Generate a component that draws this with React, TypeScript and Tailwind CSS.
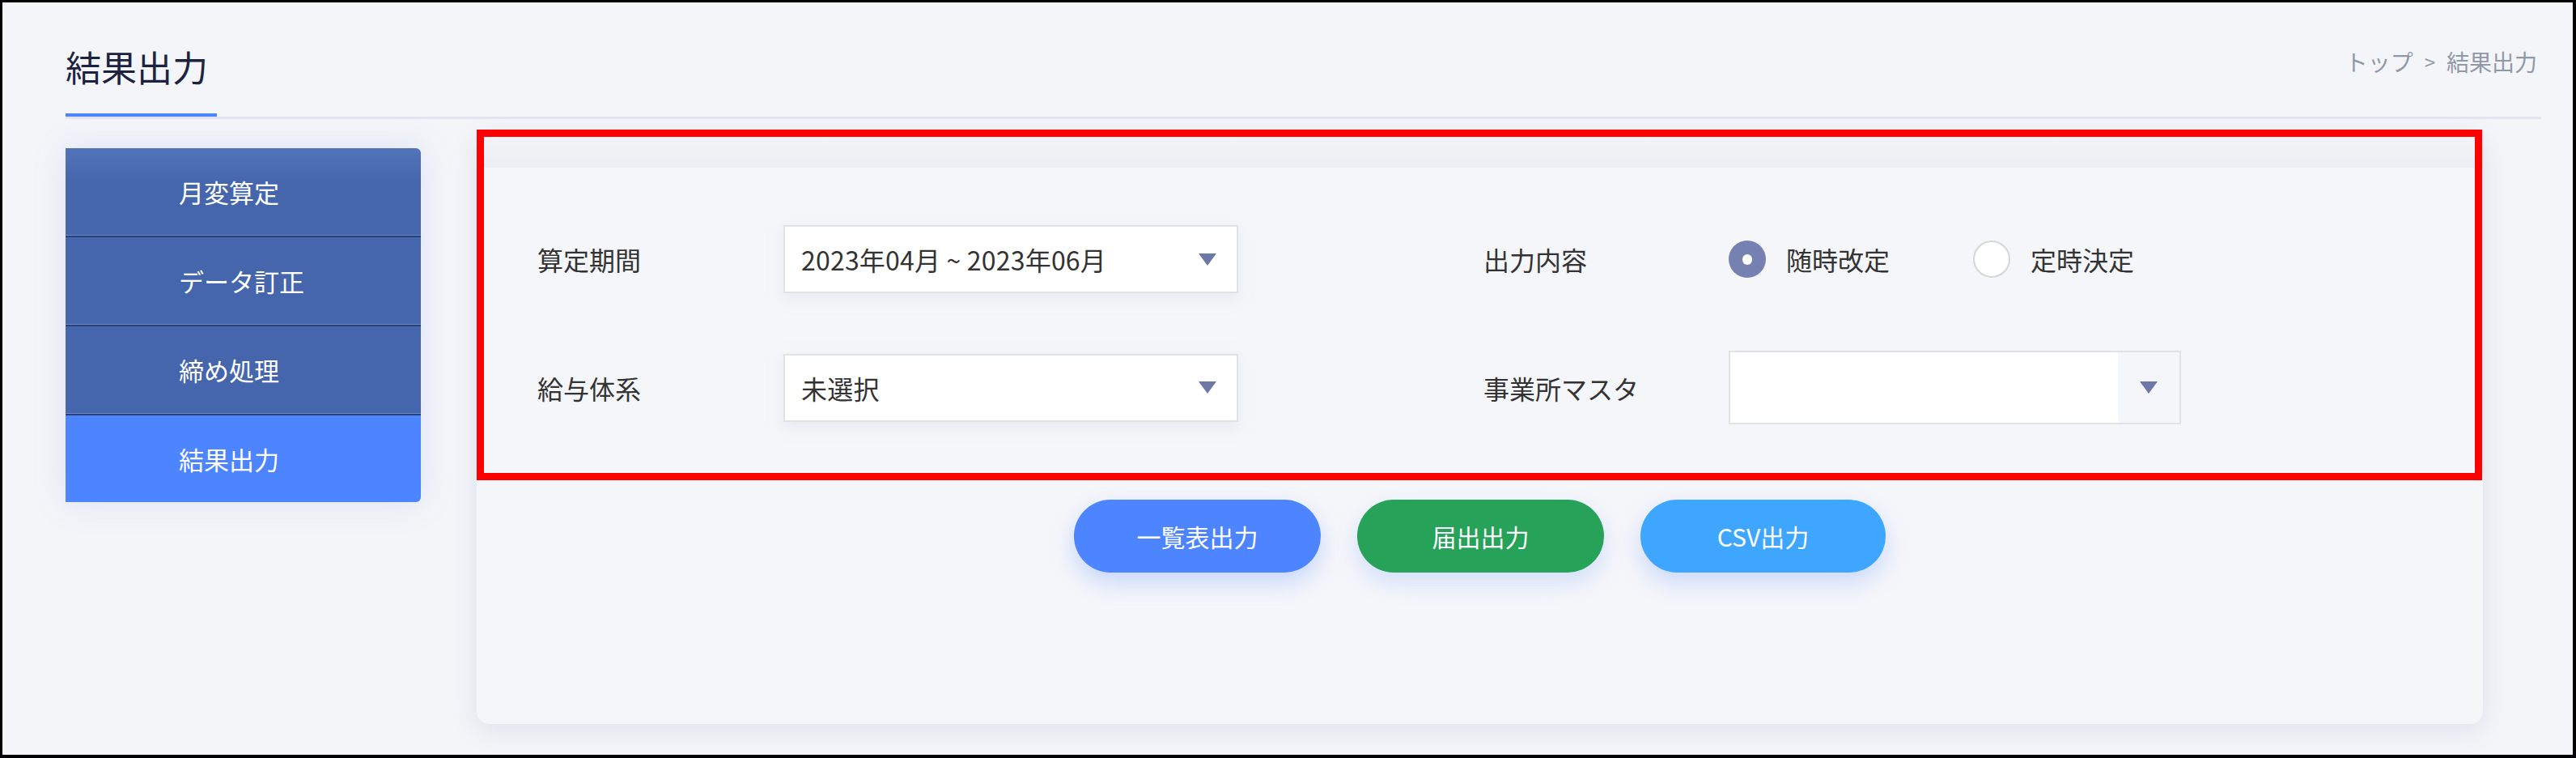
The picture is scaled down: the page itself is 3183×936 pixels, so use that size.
import { useState } from 'react'

const menu = ['月変算定', 'データ訂正', '締め処理', '結果出力']

function Arrow() {
  return (
    <svg width="22" height="15" viewBox="0 0 22 15" className="shrink-0">
      <polygon points="0,0 22,0 11,15" fill="#6c78a8" />
    </svg>
  )
}

function Select({ value }: { value: string }) {
  return (
    <div className="w-[562px] h-[84px] bg-white border-2 border-[#e1e2e6] shadow-[0_6px_14px_rgba(220,224,234,0.5)] flex items-center pl-[20px] pr-[25px]">
      <span className="flex-1 text-[32px] leading-none text-[#333] tracking-[0.2px]">{value}</span>
      <Arrow />
    </div>
  )
}

export default function App() {
  const [kind, setKind] = useState('随時改定')

  return (
    <div className="w-[3183px] h-[936px] overflow-hidden bg-[#f4f5f9] border-t-[3px] border-l-[3px] border-r-4 border-b-4 border-black font-['Noto_Sans_CJK_JP',sans-serif]">
      {/* header */}
      <div className="pl-[78px] pr-[39px] pt-[57px]">
        <div className="flex justify-between items-start">
          <h1 className="text-[44px] leading-none text-[#1c2340]">結果出力</h1>
          <div className="flex items-center text-[28px] leading-none text-[#9198a8] pt-[2px] pr-[5px]">
            <span>トップ</span>
            <span className="mx-[14px] text-[24px]">&gt;</span>
            <span>結果出力</span>
          </div>
        </div>
        <div className="mt-[36px] h-[4px] w-[187px] bg-[#4d84ff]" />
        <div className="h-[3px] bg-[#e2e5ee]" />
      </div>

      <div className="flex items-start pl-[78px] mt-[18px]">
        {/* sidebar */}
        <div className="mt-[18px] w-[439px] rounded-r-[6px] overflow-hidden shadow-[0_0_40px_rgba(110,145,230,0.18)]">
          {menu.map((m, i) => (
            <div key={m}>
              {i > 0 && (
                <>
                  <div className="h-[1px] bg-[#6987c9]" />
                  <div className="h-[2px] bg-[#2b4172]" />
                </>
              )}
              <div
                className={`h-[107px] flex items-center pl-[140px] text-[31px] leading-none text-white ${
                  i === 3 ? 'bg-[#4d84ff]' : i === 0 ? 'bg-gradient-to-b from-[#5373b8] to-[#4566ad] to-40%' : 'bg-[#4566ad]'
                }`}
              >
                {m}
              </div>
            </div>
          ))}
        </div>

        {/* card */}
        <div className="relative ml-[69px] w-[2479px] h-[729px] rounded-[16px] bg-[#f5f6fa] shadow-[0_6px_30px_rgba(190,198,218,0.45)]">
          <div className="h-[42px] rounded-t-[16px] bg-gradient-to-b from-[#f3f4f8] to-[#eceef3]" />

          <div className="pt-[71px] pl-[75px]">
            <div className="grid grid-cols-[1169px_1fr] h-[84px] items-center">
              <div className="flex items-center">
                <div className="w-[304px] text-[32px] leading-none text-[#333]">算定期間</div>
                <Select value="2023年04月 ~ 2023年06月" />
              </div>
              <div className="flex items-center">
                <div className="w-[303px] text-[32px] leading-none text-[#333]">出力内容</div>
                <div className="flex items-center">
                  {['随時改定', '定時決定'].map((r, i) => (
                    <label
                      key={r}
                      onClick={() => setKind(r)}
                      className={`flex items-center gap-[25px] cursor-pointer ${i === 0 ? 'mr-[103px]' : ''}`}
                    >
                      {kind === r ? (
                        <span className="w-[46px] h-[46px] rounded-full bg-[#7481b1] flex items-center justify-center">
                          <span className="w-[12px] h-[13px] rounded-full bg-white" />
                        </span>
                      ) : (
                        <span className="w-[46px] h-[46px] rounded-full bg-white border-2 border-[#d5d6da]" />
                      )}
                      <span className="text-[32px] leading-none text-[#333]">{r}</span>
                    </label>
                  ))}
                </div>
              </div>
            </div>

            <div className="mt-[71px] grid grid-cols-[1169px_1fr] h-[91px] items-center">
              <div className="flex items-center">
                <div className="w-[304px] text-[32px] leading-none text-[#333]">給与体系</div>
                <Select value="未選択" />
              </div>
              <div className="flex items-center">
                <div className="w-[303px] text-[32px] leading-none text-[#333]">事業所マスタ</div>
                <div className="w-[559px] h-[91px] bg-white border-2 border-[#e1e2e6] flex">
                  <div className="flex-1" />
                  <div className="w-[76px] bg-[#f5f6f9] flex items-center justify-center">
                    <Arrow />
                  </div>
                </div>
              </div>
            </div>
          </div>

          <div className="mt-[93px] flex justify-center gap-[45px]">
            <button className="w-[305px] h-[90px] rounded-full bg-[#4d84ff] text-white text-[30px] leading-none shadow-[0_12px_28px_rgba(77,132,255,0.28)]">
              一覧表出力
            </button>
            <button className="w-[305px] h-[90px] rounded-full bg-[#26a259] text-white text-[30px] leading-none shadow-[0_12px_28px_rgba(77,132,255,0.2)]">
              届出出力
            </button>
            <button className="w-[303px] h-[90px] rounded-full bg-[#3fa6ff] text-white text-[30px] leading-none shadow-[0_12px_28px_rgba(77,132,255,0.25)]">
              CSV出力
            </button>
          </div>

          {/* red highlight frame */}
          <div className="absolute left-0 right-[1px] top-[-5px] h-[433px] border-[9px] border-[#ff0000] pointer-events-none" />
        </div>
      </div>
    </div>
  )
}
